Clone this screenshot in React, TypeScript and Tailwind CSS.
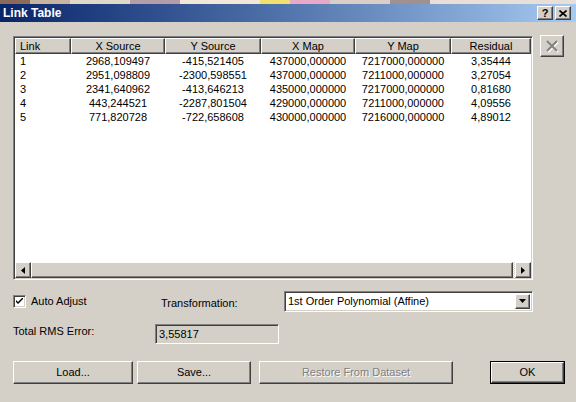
import React from 'react';

const rows = [
  ['1', '2968,109497', '-415,521405', '437000,000000', '7217000,000000', '3,35444'],
  ['2', '2951,098809', '-2300,598551', '437000,000000', '7211000,000000', '3,27054'],
  ['3', '2341,640962', '-413,646213', '435000,000000', '7217000,000000', '0,81680'],
  ['4', '443,244521', '-2287,801504', '429000,000000', '7211000,000000', '4,09556'],
  ['5', '771,820728', '-722,658608', '430000,000000', '7216000,000000', '4,89012'],
];

const cols = [
  { name: 'Link', w: 'w-[56px]', left: true },
  { name: 'X Source', w: 'w-[94px]' },
  { name: 'Y Source', w: 'w-[96px]' },
  { name: 'X Map', w: 'w-[94px]' },
  { name: 'Y Map', w: 'w-[96px]' },
  { name: 'Residual', w: 'w-[80px]' },
];

const raised =
  'border border-t-white border-l-white border-r-[#404040] border-b-[#404040] shadow-[inset_-1px_-1px_0_#808080]';
const sunken =
  'border border-t-[#808080] border-l-[#808080] border-r-white border-b-white shadow-[inset_1px_1px_0_#404040,inset_-1px_-1px_0_#d4d0c8]';

const Arrow = ({ dir }: { dir: 'left' | 'right' | 'down' }) => {
  const pts =
    dir === 'left' ? '4,0 4,7 0,3.5' : dir === 'right' ? '0,0 0,7 4,3.5' : '0,0 7,0 3.5,4';
  const [w, h] = dir === 'down' ? [7, 4] : [4, 7];
  return (
    <svg width={w} height={h} viewBox={`0 0 ${w} ${h}`}>
      <polygon points={pts} fill="#000" />
    </svg>
  );
};

export default function App() {
  return (
    <div className="w-[576px] h-[402px] overflow-hidden bg-[#d4d0c8] text-[11px] text-black font-['Liberation_Sans',Arial,sans-serif]">
      {/* desktop strip behind */}
      <div className="h-[4px] flex">
        <div className="w-[30px] bg-[#8a6a5a]" />
        <div className="w-[40px] bg-[#c8b4a0]" />
        <div className="w-[60px] bg-[#e0d8c8]" />
        <div className="w-[50px] bg-[#b49ca8]" />
        <div className="w-[80px] bg-[#f0e8d8]" />
        <div className="w-[30px] bg-[#f0e070]" />
        <div className="w-[40px] bg-[#e8a8c8]" />
        <div className="w-[60px] bg-[#d8d0c8]" />
        <div className="w-[40px] bg-[#a09090]" />
        <div className="flex-1 bg-[#e8e0d8]" />
      </div>

      {/* title bar */}
      <div className="h-[18px] flex items-center justify-between pl-[3px] pr-[5px] bg-gradient-to-r from-[#0a246a] to-[#a6caf0]">
        <span className="text-white font-bold text-[12px] leading-none">Link Table</span>
        <div className="flex">
          <div className={`w-[16px] h-[14px] bg-[#d4d0c8] flex items-center justify-center font-bold text-[11px] leading-none ${raised}`}>?</div>
          <div className={`ml-[2px] w-[16px] h-[14px] bg-[#d4d0c8] flex items-center justify-center ${raised}`}>
            <svg width="8" height="7" viewBox="0 0 8 7">
              <path d="M0.5 0.5 L7.5 6.5 M7.5 0.5 L0.5 6.5" stroke="#000" strokeWidth="1.6" />
            </svg>
          </div>
        </div>
      </div>

      <div className="pl-[13px] pt-[14px] flex items-start">
        {/* list view */}
        <div className={`w-[520px] h-[244px] bg-white flex flex-col ${sunken} p-[1px]`}>
          <div className="flex h-[16px]">
            {cols.map((c) => (
              <div
                key={c.name}
                className={`${c.w} shrink-0 bg-[#d4d0c8] flex items-center ${c.left ? 'pl-[4px]' : 'justify-center'} ${raised}`}
              >
                {c.name}
              </div>
            ))}
          </div>
          <div className="flex-1">
            {rows.map((r) => (
              <div key={r[0]} className="flex h-[14px] items-center leading-none">
                {r.map((v, i) => (
                  <div
                    key={i}
                    className={`${cols[i].w} shrink-0 ${i === 0 ? 'pl-[5px]' : 'text-center'}`}
                  >
                    {v}
                  </div>
                ))}
              </div>
            ))}
          </div>
          {/* horizontal scrollbar */}
          <div className="h-[16px] flex">
            <div className={`w-[16px] h-[16px] bg-[#d4d0c8] flex items-center justify-center ${raised}`}>
              <Arrow dir="left" />
            </div>
            <div className={`flex-1 h-[16px] bg-[#d4d0c8] ${raised}`} />
            <div className="w-[2px] bg-[repeating-conic-gradient(#d4d0c8_0_25%,#fff_0_50%)] bg-[length:2px_2px]" />
            <div className={`w-[16px] h-[16px] bg-[#d4d0c8] flex items-center justify-center ${raised}`}>
              <Arrow dir="right" />
            </div>
          </div>
        </div>

        {/* delete link button (disabled) */}
        <div className={`ml-[7px] mt-[-1px] w-[24px] h-[22px] bg-[#d4d0c8] flex items-center justify-center ${raised}`}>
          <svg width="14" height="14" viewBox="0 0 14 14">
            <path d="M2 2 L12 12 M12 2 L2 12" stroke="#fff" strokeWidth="2" transform="translate(1 1)" />
            <path d="M2 2 L12 12 M12 2 L2 12" stroke="#808080" strokeWidth="2" />
          </svg>
        </div>
      </div>

      {/* auto adjust / transformation */}
      <div className="pl-[13px] mt-[10px] flex items-center h-[22px]">
        <div className={`w-[13px] h-[13px] bg-white flex items-center justify-center ${sunken}`}>
          <svg width="7" height="7" viewBox="0 0 7 7">
            <path d="M0 2 L0 4 L2 6 L7 1 L7 -1 L2 4 Z" fill="#000" />
          </svg>
        </div>
        <span className="ml-[5px] w-[130px]">Auto Adjust</span>
        <span className="w-[123px] pt-[4px]">Transformation:</span>
        <div className={`w-[249px] h-[21px] bg-white flex items-center pl-[3px] pr-[2px] ${sunken}`}>
          <span className="flex-1">1st Order Polynomial (Affine)</span>
          <div className={`w-[15px] h-[15px] bg-[#d4d0c8] flex items-center justify-center ${raised}`}>
            <Arrow dir="down" />
          </div>
        </div>
      </div>

      {/* rms error */}
      <div className="pl-[13px] mt-[12px] flex items-center h-[20px]">
        <span className="w-[142px] -mt-[6px]">Total RMS Error:</span>
        <div className={`w-[124px] h-[20px] flex items-center pl-[3px] ${sunken}`}>3,55817</div>
      </div>

      {/* buttons */}
      <div className="pl-[13px] mt-[17px] flex h-[23px]">
        <button className={`w-[120px] h-[23px] bg-[#d4d0c8] ${raised}`}>Load...</button>
        <button className={`ml-[4px] w-[114px] h-[23px] bg-[#d4d0c8] ${raised}`}>Save...</button>
        <button
          className={`ml-[8px] w-[194px] h-[23px] bg-[#d4d0c8] text-[#808080] [text-shadow:1px_1px_0_#fff] ${raised}`}
        >
          Restore From Dataset
        </button>
        <button className="ml-[37px] w-[75px] h-[23px] bg-[#d4d0c8] border border-black p-0">
          <div className={`w-full h-full flex items-center justify-center ${raised}`}>OK</div>
        </button>
      </div>
    </div>
  );
}
